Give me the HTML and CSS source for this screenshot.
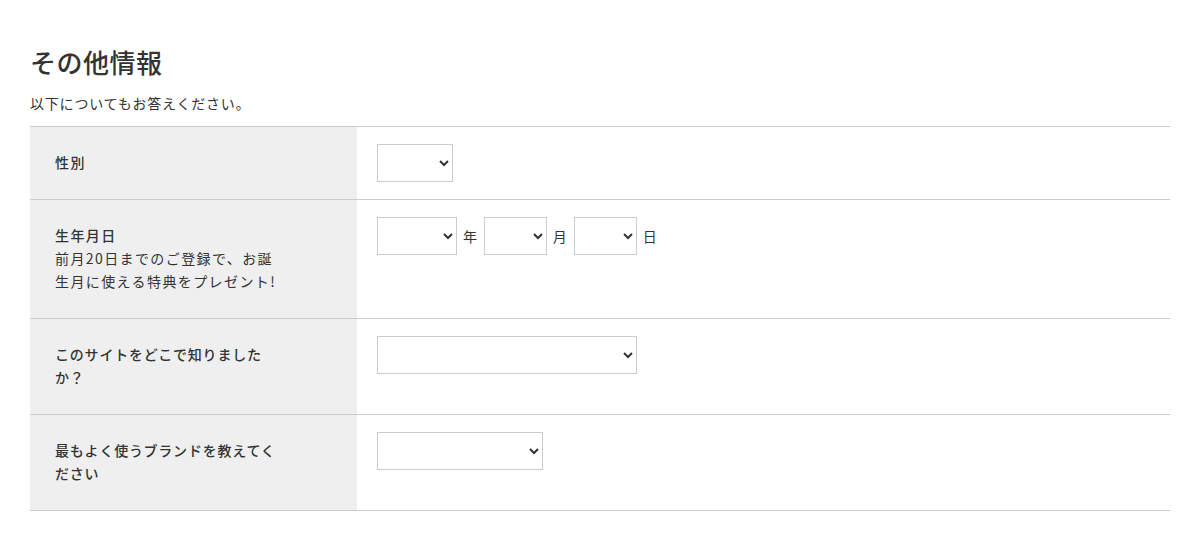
FILE: index.html
```html
<!DOCTYPE html>
<html lang="ja">
<head>
<meta charset="utf-8">
<title>その他情報</title>
<link rel="stylesheet" href="styles.css">
</head>
<body>
<section class="section">
  <h2 class="section-title">その他情報</h2>
  <p class="section-lead">以下についてもお答えください。</p>
  <div class="form-table">
    <div class="form-row">
      <div class="form-label"><span class="label-text label-text-wide">性別</span></div>
      <div class="form-field">
        <select class="select select-gender"><option></option></select>
      </div>
    </div>
    <div class="form-row">
      <div class="form-label">
        <span class="label-text label-text-wide">生年月日</span>
        <span class="label-note">前月20日までのご登録で、お誕生月に使える特典をプレゼント!</span>
      </div>
      <div class="form-field">
        <div class="date-group">
          <select class="select select-year"><option></option></select>
          <span class="unit">年</span>
          <select class="select select-md"><option></option></select>
          <span class="unit">月</span>
          <select class="select select-md"><option></option></select>
          <span class="unit">日</span>
        </div>
      </div>
    </div>
    <div class="form-row">
      <div class="form-label"><span class="label-text">このサイトをどこで知りましたか？</span></div>
      <div class="form-field">
        <select class="select select-site"><option></option></select>
      </div>
    </div>
    <div class="form-row">
      <div class="form-label"><span class="label-text">最もよく使うブランドを教えてください</span></div>
      <div class="form-field">
        <select class="select select-brand"><option></option></select>
      </div>
    </div>
  </div>
</section>
</body>
</html>
```

FILE: styles.css
```css
* { box-sizing: border-box; }
html, body { margin: 0; padding: 0; background: #fff; }
body {
  font-family: "Noto Sans CJK JP", "Noto Sans", sans-serif;
  color: #333;
  letter-spacing: 0.05em;
}
.section {
  padding: 44px 30px 0;
}
.section-title {
  margin: 0;
  font-size: 26px;
  line-height: 36px;
  font-weight: 500;
  letter-spacing: 0.02em;
}
.section-lead {
  margin: 12px 0 0;
  font-size: 14px;
  line-height: 22px;
}
.form-table {
  margin-top: 12px;
  border-top: 1px solid #ccc;
}
.form-row {
  display: grid;
  grid-template-columns: 327px 1fr;
  border-bottom: 1px solid #ccc;
}
.form-label {
  background: #efefef;
  padding: 24px 78px 25px 25px;
  font-size: 14px;
  line-height: 23px;
}
.label-text {
  display: block;
  font-weight: 500;
}
.label-text-wide {
  letter-spacing: 0.1em;
}
.label-note {
  display: block;
  font-weight: 400;
  letter-spacing: 0.1em;
}
.form-field {
  padding: 17px 20px;
}
.date-group {
  display: flex;
  align-items: center;
  gap: 6px;
}
.unit {
  font-size: 14px;
  line-height: 38px;
}
.select {
  display: block;
  height: 38px;
  border: 1px solid #ccc;
  border-radius: 0;
  background: #fff;
  font-family: inherit;
  font-size: 14px;
  color: #333;
}
.select-gender { width: 76px; }
.select-year { width: 80px; }
.select-md { width: 63px; }
.select-site { width: 260px; }
.select-brand { width: 166px; }
```
